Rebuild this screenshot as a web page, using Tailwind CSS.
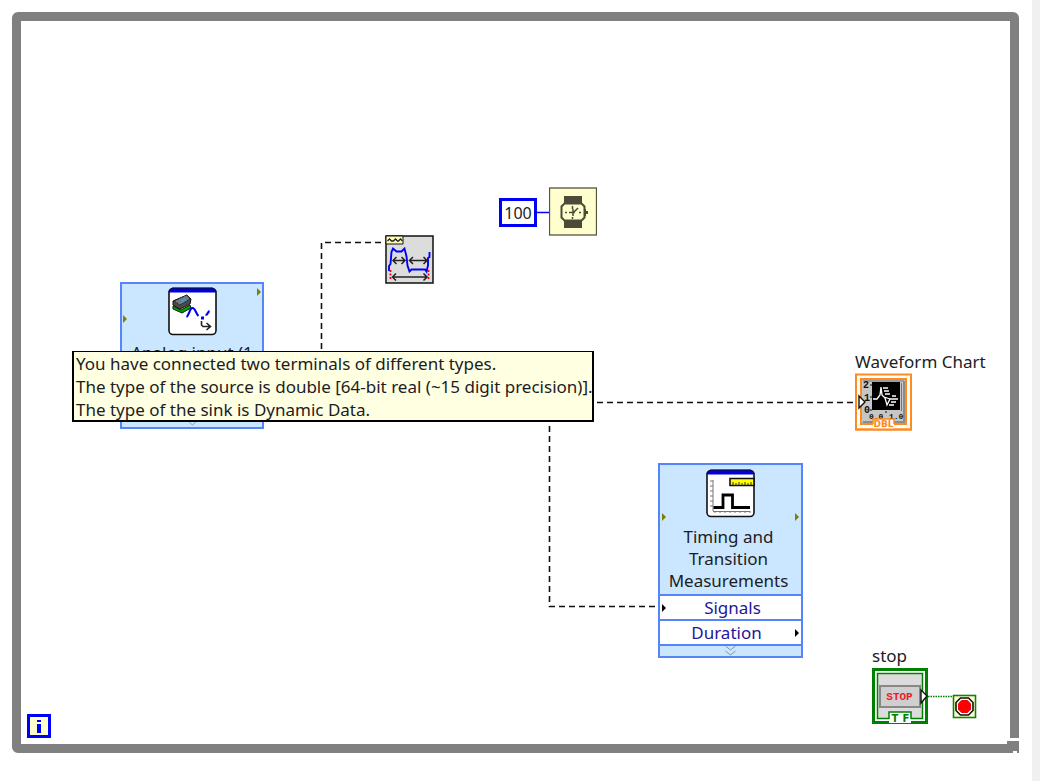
<!DOCTYPE html>
<html lang="en">
<head>
<meta charset="utf-8">
<title>Block Diagram</title>
<script src="https://cdn.jsdelivr.net/npm/@tailwindcss/browser@4"></script>
</head>
<body class="flex min-h-screen bg-white font-['Noto_Sans',sans-serif] text-[17px] text-[#1c1c24]">
<main class="relative flex flex-1 overflow-hidden pt-3 pr-[13px] pb-7 pl-3">
  <!-- While loop frame -->
  <section aria-label="While loop" class="relative flex-1 rounded-md border-9 border-[#808080] bg-white">
    <svg class="absolute -right-[9px] -bottom-[9px]" width="13" height="15" viewBox="0 0 13 15" shape-rendering="crispEdges">
      <path fill="#fff" d="M4 0h9v15H4z"/>
      <path fill="#808080" d="M1 3h12v12h-2v-2H7v2H1z"/>
    </svg>
  </section>

  <!-- Wires -->
  <svg class="absolute top-0 left-0" width="1032" height="781" viewBox="0 0 1032 781" fill="none">
    <g stroke="#111" stroke-width="1.600" stroke-dasharray="6 4">
      <path d="M381 242.500H321.500V352"/>
      <path d="M597 402.500H856"/>
      <path d="M549.500 426V606.500H660"/>
    </g>
    <path stroke="#00f" stroke-width="1.500" d="M536 212.500H549"/>
    <path stroke="#008000" stroke-width="1.500" stroke-dasharray="1.500 1" d="M928 696.500H953"/>
  </svg>

  <!-- Wait constant -->
  <div class="absolute top-[198px] left-[499px] flex h-[29px] w-[38px] items-center justify-center border-3 border-[#0000f5] bg-white text-base">100</div>
  <svg class="absolute top-[187px] left-[549px]" width="48" height="49" viewBox="0 0 48 49" role="img" aria-label="Wait (ms)">
    <rect x=".5" y="1" width="47" height="47" fill="#ffffcd" stroke="#55553f" stroke-width="1.300"/>
    <path fill="#4b4b38" d="M15 9h18v8H15zM15 33h18v8H15zM35 22h2v2h2v3h-2v2h-2z"/>
    <path d="M15.500 16.500h17l3 3v11l-3 3h-17l-3-3v-11z" fill="#ffffcd" stroke="#4b4b38" stroke-width="2"/>
    <path d="M23.500 19v3M23.500 30v2M16 25.500h2M30 25.500h2M20 25.500h6M24 29v-7M24 26l5-5" stroke="#4b4b38" stroke-width="1.500" fill="none"/>
  </svg>

  <!-- Pulse measurements -->
  <svg class="absolute top-[235px] left-[385px]" width="49" height="49" viewBox="0 0 49 49" role="img" aria-label="Pulse Measurements" fill="none">
    <rect x="1" y="1" width="47" height="47" fill="#dcdcdc" stroke="#111" stroke-width="1.500"/>
    <path d="M1 1h17v8H1z" fill="#ffffb5" stroke="#111"/>
    <path d="M2.500 6l2-2 2 2h2l2-2 2 2h1l2-2 2 2" stroke="#222" stroke-width="1.300"/>
    <path d="M5.500 35v10M43.500 35v10" stroke="#f00020" stroke-width="1.800" stroke-dasharray="2 1.500"/>
    <path d="M4 36v-5l1.500-2 1-12 1.500-3.500 3.500 3h5l3-3 2 8 1 9 2 6 2-2h13.500l1.500 2 1.500-6V23l1.500-1v-5" stroke="#0000f5" stroke-width="1.900"/>
    <path d="M8 25.500h12M11.500 22L8 25.500l3.500 3.500M16.500 22l3.500 3.500-3.500 3.500M24 25.500h18M28 22l-3.500 3.500L28 29M38.500 22l3.500 3.500-3.500 3.500M7 42h35M11 38.500L7.500 42l3.500 3.500M38.500 38.500L42 42l-3.500 3.500" stroke="#222" stroke-width="1.500"/>
  </svg>

  <!-- Acquisition express block -->
  <article class="absolute top-[282px] left-[120px] flex h-[147px] w-36 flex-col items-center border-2 border-[#5585f8] bg-[#cbe7ff]">
    <svg class="mt-[3px] shrink-0" width="49" height="49" viewBox="0 0 49 49" fill="none">
      <rect x="1" y="1.500" width="47" height="46" rx="4" fill="#fff" stroke="#111" stroke-width="1.600"/>
      <path d="M4 1h41l3 3v1.500H1V4z" fill="#0000d8"/>
      <path d="M1 5V4l3-3h41l3 3v1" stroke="#111"/>
      <path d="M5 19l8 4 9-5 1 3-9 5-9-4z" fill="#00a000" stroke="#052805"/>
      <path d="M5 14l14-6 4 4-1 5-10 5-7-4z" fill="#4a4a4a" stroke="#111"/>
      <path d="M6 14l13-6 3 4-10 6z" fill="#777" stroke="#222" stroke-dasharray="2 1"/>
      <path d="M12 13l5-2 2 2-5 3z" fill="#4296c8"/>
      <path d="M18.500 30c2.500-1 3-9 6-9s3.500 6 6 8M37.500 28c2.500 0 2-3 4-4" stroke="#0000f5" stroke-width="2.200"/>
      <path d="M33 29.500h3v3h-3z" fill="#0000f5"/>
      <path d="M33.500 34v4l1.500 1.500h7M38.500 36l4 3.500-4 3.500" stroke="#222" stroke-width="1.600"/>
    </svg>
    <h2 class="mt-[5px] leading-6 whitespace-nowrap">Analog input (1</h2>
    <svg class="absolute top-[3px] right-0" width="6" height="10"><path d="M1 1l4 4-4 4z" fill="#808000"/></svg>
    <svg class="absolute top-[30px] left-0" width="6" height="10"><path d="M1 1l4 4-4 4z" fill="#808000"/></svg>
    <svg class="mt-auto" width="13" height="9" viewBox="0 0 13 9" fill="none" stroke="#8aa0b4"><path d="M2 0l4.500 3L11 0M2 3l4.500 4L11 3"/></svg>
  </article>

  <!-- Broken wire tooltip -->
  <div role="tooltip" class="absolute top-[351px] left-[72px] z-10 flex h-[71px] w-[522px] flex-col border-2 border-t-1 border-black bg-[#ffffe1] pl-0.5 leading-[23px] whitespace-nowrap">
    <p>You have connected two terminals of different types.</p>
    <p>The type of the source is double [64-bit real (~15 digit precision)].</p>
    <p>The type of the sink is Dynamic Data.</p>
  </div>

  <!-- Waveform chart terminal -->
  <figure class="absolute top-[350px] left-[855px]">
    <figcaption class="leading-[23px] whitespace-nowrap">Waveform Chart</figcaption>
    <svg width="58" height="58" viewBox="0 0 58 58" fill="none">
      <rect x="1" y="1.500" width="55" height="55" fill="#fff" stroke="#ff8a20" stroke-width="2"/>
      <rect x="6" y="6" width="45" height="45" fill="#c6c6c6" stroke="#ff8a20" stroke-width="2"/>
      <path d="M17 9h28v28H17z" fill="#000"/>
      <path d="M8 8h41M46.500 10v28" stroke="#777"/>
      <path d="M49 8v41H8" stroke="#8c8c8c" stroke-width="2"/>
      <path d="M18 26h4l3-4 1-8 1 8 3 3 2 7 3-6h8M28 15h5M29 18h5M30 21h5M37 23h4M36 29h5M34 32h5M29 24l6 2" stroke="#fff" stroke-width="1.300"/>
      <g font-family="Liberation Mono" font-size="10" font-weight="700" fill="#111">
        <text x="8" y="15">2</text>
        <text x="9" y="28">1</text>
        <text x="9" y="40">0</text>
        <text x="14" y="46" font-size="8">0.0</text>
        <text x="34" y="46" font-size="8">1.0</text>
      </g>
      <path d="M15 12h2M15 24h2M15 37h2M31 38v2" stroke="#111"/>
      <path d="M4 23l6 6-6 6z" fill="#fff" stroke="#111" stroke-width="1.400"/>
      <path d="M18 46h21v10H18z" fill="#fff"/>
      <path d="M18 51v-5h21v5" stroke="#ff8a20" stroke-width="1.500"/>
      <text x="28.500" y="54" text-anchor="middle" font-family="DejaVu Sans" font-size="9" font-weight="700" fill="#ff8a20">DBL</text>
      <path d="M0 56.500h57" stroke="#ff8a20" stroke-width="2"/>
    </svg>
  </figure>

  <!-- Timing and Transition Measurements -->
  <article class="absolute top-[463px] left-[658px] flex w-[145px] flex-col border-2 border-[#5585f8] bg-[#cbe7ff] text-center">
    <svg class="mx-auto mt-1" width="49" height="49" viewBox="0 0 49 49" fill="none">
      <rect x="1" y="1.500" width="47" height="46" rx="4" fill="#fff" stroke="#111" stroke-width="1.600"/>
      <path d="M4 1h41l3 3v1.500H1V4z" fill="#0000d8"/>
      <path d="M1 5V4l3-3h41l3 3v1" stroke="#111"/>
      <path d="M24 9.500h24v7H24z" fill="#ff0" stroke="#111" stroke-width="1.600"/>
      <path d="M27 16v-3M30 16v-2M33 16v-3M36 16v-2M39 16v-3M42 16v-2M45 16v-3" stroke="#333"/>
      <path d="M7 11v31M7 42.500h37M4 12h3M4 17h3M4 22h3M4 27h3M4 32h3M4 37h3M9 42v2M14 42v2M19 42v2M24 42v2M29 42v2M34 42v2M39 42v2M44 42v2" stroke="#777"/>
      <path d="M7.500 38.500H17V26h9.500v12.500H44" stroke="#000" stroke-width="2.800"/>
    </svg>
    <svg class="absolute top-[47px] left-0.5" width="6" height="10"><path d="M0 1l4 4-4 4z" fill="#808000"/></svg>
    <svg class="absolute top-[47px] right-0" width="6" height="10"><path d="M0 1l4 4-4 4z" fill="#808000"/></svg>
    <h2 class="mt-2 pr-1 pb-0.5 leading-[22px]">Timing and<br>Transition<br>Measurements</h2>
    <ul class="text-[#25159a]">
      <li class="relative flex h-[27px] items-center justify-center border-y-2 border-[#5585f8] bg-white pl-1">Signals
        <svg class="absolute top-[7px] left-0.5" width="6" height="10"><path d="M0 1l4 4-4 4z" fill="#000"/></svg></li>
      <li class="relative flex h-[25px] items-center justify-center border-b-2 border-[#5585f8] bg-white pr-2">Duration
        <svg class="absolute top-[7px] right-0" width="6" height="10"><path d="M0 1l4 4-4 4z" fill="#000"/></svg></li>
    </ul>
    <svg class="mx-auto" width="13" height="10" viewBox="0 0 13 10" fill="none" stroke="#8095aa"><path d="M1.500 0l5 4 5-4M1.500 5l5 4 5-4"/></svg>
  </article>

  <!-- Stop button terminal -->
  <figure class="absolute top-[644px] left-[872px]">
    <figcaption class="leading-6">stop</figcaption>
    <svg width="57" height="57" viewBox="0 0 57 57" fill="none">
      <rect x="1.500" y="1.500" width="53" height="53" fill="#fff" stroke="#008000" stroke-width="3"/>
      <rect x="5.500" y="5.500" width="45" height="45" fill="#dcdcdc" stroke="#008000" stroke-width="1.500"/>
      <path d="M8 18h40v21H8z" fill="#cfcfcf" stroke="#888" stroke-width="2"/>
      <text x="27.500" y="32" text-anchor="middle" font-family="Liberation Mono" font-size="11" font-weight="700" fill="#e82030">STOP</text>
      <path d="M49 22l6 6-6 7z" fill="#fff" stroke="#111" stroke-width="1.400"/>
      <path d="M17 44h22v12H17z" fill="#fff"/>
      <path d="M17 51v-7h22v7" stroke="#008000" stroke-width="1.500"/>
      <text x="23" y="54" text-anchor="middle" font-family="DejaVu Sans" font-size="10" font-weight="700" fill="#008000">T</text>
      <text x="34" y="54" text-anchor="middle" font-family="DejaVu Sans" font-size="10" font-weight="700" fill="#008000">F</text>
      <path d="M0 55.500h56" stroke="#008000"/>
    </svg>
  </figure>

  <!-- Loop condition -->
  <svg class="absolute top-[694px] left-[952px]" width="25" height="25" viewBox="0 0 25 25" role="img" aria-label="Loop condition">
    <rect x="1.500" y="1.500" width="22" height="22" fill="#ffffcd" stroke="#148014" stroke-width="1.600"/>
    <path d="M8.500 4h8L21 8.500v8L16.500 21h-8L4 16.500v-8z" fill="#fff" stroke="#111" stroke-width="1.600"/>
    <path d="M9.500 6h6l3.500 3.500v6L15.500 19h-6L6 15.500v-6z" fill="#f00"/>
  </svg>

  <!-- Iteration terminal -->
  <svg class="absolute top-[714px] left-[27px]" width="24" height="24" viewBox="0 0 24 24" role="img" aria-label="Iteration count" shape-rendering="crispEdges">
    <rect x="1.500" y="1.500" width="21" height="21" fill="#ffffcd" stroke="#0000f5" stroke-width="3"/>
    <path d="M10 6h4v2h-4zM10 10h4v9h-4z" fill="#0000f5"/>
  </svg>
</main>
<aside class="w-2 bg-[#f0f0f0]"></aside>
</body>
</html>
